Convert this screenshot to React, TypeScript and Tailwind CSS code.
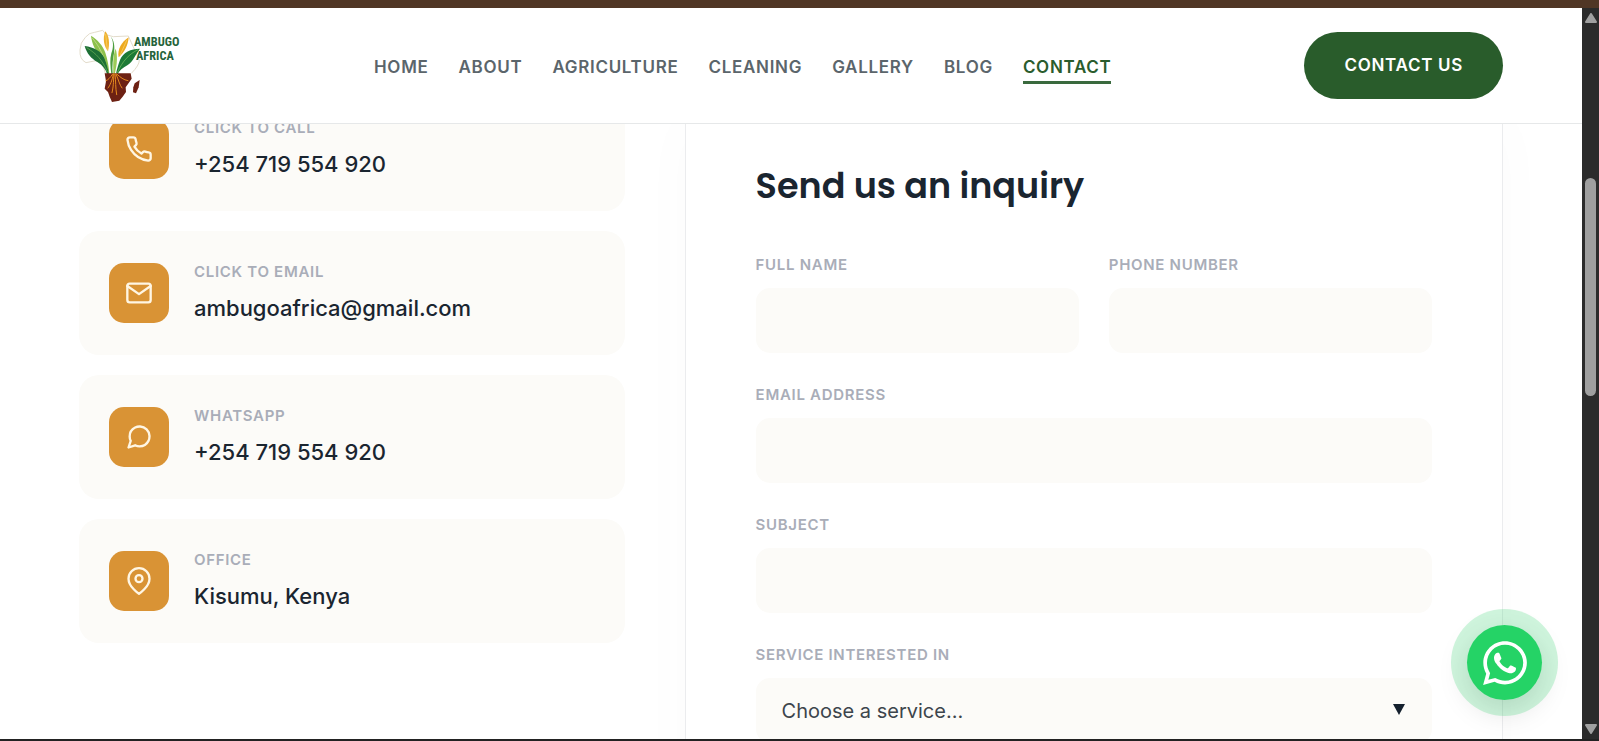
import type { ReactNode } from "react";
import { FiMail, FiMapPin, FiMessageCircle, FiPhone } from "react-icons/fi";
import { FaWhatsapp } from "react-icons/fa";

const links = ["Home", "About", "Agriculture", "Cleaning", "Gallery", "Blog", "Contact"];

const contacts = [
  { label: "Click to call", value: "+254 719 554 920", href: "tel:+254719554920", Icon: FiPhone },
  { label: "Click to email", value: "ambugoafrica@gmail.com", href: "mailto:ambugoafrica@gmail.com", Icon: FiMail },
  { label: "WhatsApp", value: "+254 719 554 920", href: "#whatsapp", Icon: FiMessageCircle },
  { label: "Office", value: "Kisumu, Kenya", href: "#office", Icon: FiMapPin },
];

function Logo() {
  return (
    <svg viewBox="57 66 306 264" className="w-[102px] shrink-0" role="img" aria-label="Ambugo Africa">
      <path
        d="M60 150 Q60 128 76 112 Q88 97 104 97 L128 91 L138 104 L160 110 L205 108 L214 128 L238 180 Q238 196 214 220 M60 150 Q58 178 78 188 L108 182 L128 192 L136 220"
        fill="none"
        stroke="#e3dccb"
        strokeWidth="3"
      />
      <path d="M93 107 C112 118 128 136 136 158 C143 178 147 202 148 222 L143 222 C139 198 132 180 120 166 C106 152 96 132 93 107Z" fill="#8cc04b" />
      <path d="M97 114 C116 138 132 162 144 216" fill="none" stroke="#d3e39a" strokeWidth="2" />
      <path d="M136 94 C147 106 150 130 144 154 C132 140 127 116 136 94Z" fill="#eeb02c" />
      <path d="M137 102 L142 150" stroke="#f8d774" strokeWidth="2" />
      <path d="M206 112 C204 136 194 156 176 172 C171 150 184 126 206 112Z" fill="#eda91f" />
      <path d="M201 119 L180 166" stroke="#f8d774" strokeWidth="2" />
      <path d="M152 110 C162 124 160 144 154 160 C149 178 151 200 154 222 L158 222 C156 196 159 176 162 160 C165 138 162 120 152 110Z" fill="#4d9d3e" />
      <path d="M167 146 C173 166 172 192 164 222 L160 222 C160 190 158 168 167 146Z" fill="#9ccb58" />
      <path d="M74 138 C102 142 124 154 133 174 C140 192 145 208 146 222 L141 222 C137 208 128 196 112 186 C94 176 80 160 74 138Z" fill="#1d6f35" />
      <path d="M80 143 C108 160 128 180 142 216" fill="none" stroke="#6fb45b" strokeWidth="2" />
      <path d="M240 146 C212 146 190 156 180 180 C175 194 170 210 168 222 L173 222 C178 212 188 204 202 196 C220 184 226 164 240 146Z" fill="#1d7a36" />
      <path d="M234 149 C208 162 188 182 172 218" fill="none" stroke="#7cbf62" strokeWidth="2" />
      <path d="M134 220 L212 220 L215 236 L204 252 L197 262 L198 276 L188 290 L178 302 L156 306 L149 290 L144 276 L134 266 L138 244Z" fill="#6d2113" />
      <path
        d="M158 222 C150 234 144 240 138 242 M160 222 C156 244 150 256 144 264 M162 222 C160 250 160 262 156 278 M165 222 C168 246 166 262 170 284 M168 222 C176 240 178 254 186 264 M170 222 C182 232 190 240 204 242"
        fill="none"
        stroke="#e58a1f"
        strokeWidth="3"
        strokeLinecap="round"
      />
      <path d="M239 240 L236 262 L228 280 L219 277 L220 262 L224 250Z" fill="#6d2113" />
      <g fill="#26633a" fontSize="37" fontWeight="700" fontFamily='"Liberation Sans Narrow", "Roboto Condensed", "Liberation Sans", sans-serif'>
        <text x="222" y="139">AMBUGO</text>
        <text x="228" y="180">AFRICA</text>
      </g>
    </svg>
  );
}

function Field({ id, label, children }: { id: string; label: string; children?: ReactNode }) {
  return (
    <div className="flex flex-col gap-2.5">
      <label htmlFor={id} className="text-[15px] leading-[26px] font-semibold tracking-[0.7px] text-[#a9adb8] uppercase">
        {label}
      </label>
      {children ?? <input id={id} className="h-[65px] w-full rounded-[14px] bg-[#fcfbf8] px-[26px] text-xl text-[#1a2530] outline-none" />}
    </div>
  );
}

export default function App() {
  return (
    <div className="flex h-screen flex-col overflow-hidden border-t-8 border-b-2 border-t-[#503625] border-b-[#222222] bg-white font-['Inter',sans-serif]">
      <div className="flex min-h-0 flex-1">
        <div className="relative flex min-w-0 flex-1 flex-col">
          <header className="z-10 flex h-[116px] shrink-0 items-center justify-between border-b border-[#e6e8e9] bg-white px-[79px]">
            <a href="#top">
              <Logo />
            </a>
            <nav className="flex gap-[30px] pt-0.5">
              {links.map((link) => (
                <a
                  key={link}
                  href={`#${link.toLowerCase()}`}
                  className={
                    link === "Contact"
                      ? "relative text-[17px] leading-7 font-semibold tracking-[0.7px] text-[#2a5c2d] uppercase after:absolute after:inset-x-0 after:-bottom-[3px] after:h-[3px] after:bg-[#3a6a3e]"
                      : "text-[17px] leading-7 font-semibold tracking-[0.7px] text-[#5b656b] uppercase"
                  }
                >
                  {link}
                </a>
              ))}
            </nav>
            <a href="#contact" className="rounded-full bg-[#295c2b] px-10 py-5 text-[17px] leading-[27px] font-semibold tracking-[0.7px] text-white uppercase">
              Contact us
            </a>
          </header>

          <main className="min-h-0 flex-1 overflow-hidden">
            <div className="-mt-[37px] grid grid-cols-[1fr_1.5fr] gap-[60px] px-[79px]">
              <section className="flex flex-col gap-5">
                {contacts.map(({ label, value, href, Icon }) => (
                  <a key={label} href={href} className="flex h-[124px] items-center gap-[25px] rounded-[20px] bg-[#fcfbf8] px-[30px]">
                    <span className="flex size-[60px] items-center justify-center rounded-[15px] bg-[#d99335] text-[#fff6e4]">
                      <Icon size={28} />
                    </span>
                    <span className="flex flex-col pb-0.5">
                      <span className="text-[15px] leading-8 font-semibold tracking-[0.7px] text-[#a9adb8] uppercase">{label}</span>
                      <span className="text-[22px] leading-10 font-medium text-[#1a2530]">{value}</span>
                    </span>
                  </a>
                ))}
              </section>

              <section className="border border-[#ebecee] bg-white px-[70px] pt-[70px] pb-20 shadow-[0_30px_60px_rgba(0,0,0,0.02)]">
                <h2 className="mb-[38px] font-['Poppins','Inter',sans-serif] text-[35px] leading-14 font-semibold text-[#1a2530]">Send us an inquiry</h2>
                <form className="flex flex-col gap-[29px]">
                  <div className="grid grid-cols-2 gap-[30px]">
                    <Field id="name" label="Full name" />
                    <Field id="phone" label="Phone number" />
                  </div>
                  <Field id="email" label="Email address" />
                  <Field id="subject" label="Subject" />
                  <Field id="service" label="Service interested in">
                    <div className="relative">
                      <select id="service" className="h-[65px] w-full appearance-none rounded-[14px] bg-[#fcfbf8] px-[26px] text-xl text-[#3c454c] outline-none">
                        <option>Choose a service...</option>
                      </select>
                      <svg viewBox="0 0 12 11" className="pointer-events-none absolute top-[26px] right-[27px] w-3" aria-hidden="true">
                        <path d="M0 0H12L6 11Z" fill="#14202e" />
                      </svg>
                    </div>
                  </Field>
                </form>
              </section>
            </div>
          </main>

          <a
            href="#whatsapp"
            aria-label="WhatsApp"
            className="absolute right-10 bottom-[39px] z-20 flex size-[75px] items-center justify-center rounded-full bg-[#25d366] text-white shadow-[0_0_0_16px_rgba(37,211,102,0.22),0_10px_30px_rgba(0,0,0,0.15)]"
          >
            <FaWhatsapp size={50} />
          </a>
        </div>

        <div className="flex w-[17px] shrink-0 flex-col items-center bg-[#2b2b2b] py-[5px]" aria-hidden="true">
          <svg viewBox="0 0 12 10" className="w-3">
            <path d="M6 1L11 9H1Z" fill="#a0a0a0" stroke="#a0a0a0" strokeWidth="2" strokeLinejoin="round" />
          </svg>
          <div className="flex w-full flex-1 flex-col items-center pt-[155px]">
            <div className="h-[218px] w-[11px] rounded-full bg-[#9f9f9f]" />
          </div>
          <svg viewBox="0 0 12 10" className="w-3">
            <path d="M6 9L1 1H11Z" fill="#a0a0a0" stroke="#a0a0a0" strokeWidth="2" strokeLinejoin="round" />
          </svg>
        </div>
      </div>
    </div>
  );
}
